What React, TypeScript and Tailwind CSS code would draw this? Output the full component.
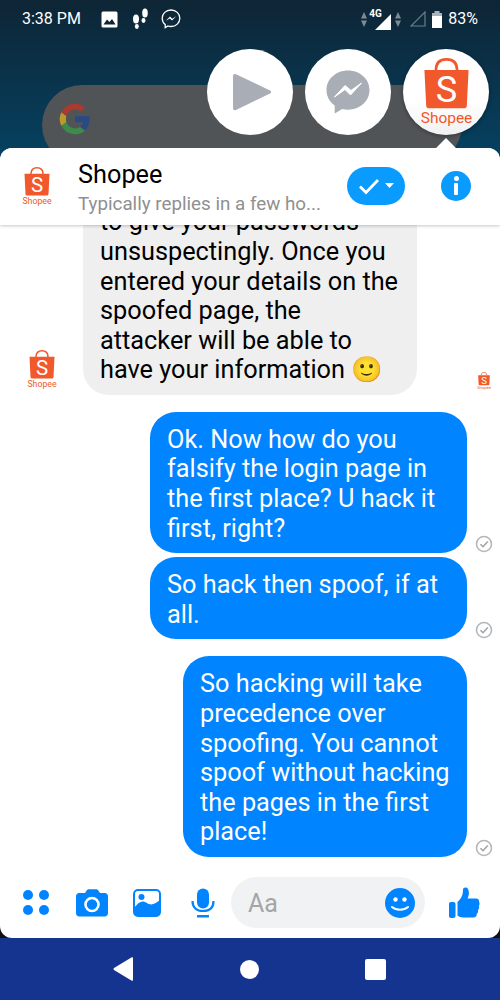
import React from "react";

const ROBOTO = "font-['Roboto',sans-serif]";

function ShopeeBag({ size }: { size: number }) {
    return (
        <svg width={size} height={size * 1.3} viewBox="0 0 60 78" className="block">
            <path d="M18 14 C18 4 24 1.500 30 1.500 C36 1.500 42 4 42 14" fill="none" stroke="#f1582c" strokeWidth="3" />
            <path d="M5 13.500 H55 L53 54 C52.800 56 51.500 57 49.500 57 H10.500 C8.500 57 7.200 56 7 54 Z" fill="#f1582c" />
            <text x="30" y="50" textAnchor="middle" fontSize="41" fill="#fff" fontFamily="Roboto, sans-serif">S</text>
            <text x="30" y="74" textAnchor="middle" fontSize="17.5" fill="#f1582c" fontFamily="Roboto, sans-serif">Shopee</text>
        </svg>
    );
}

function Check() {
    return (
        <svg width="18" height="18" viewBox="0 0 18 18" className="block">
            <circle cx="9" cy="9" r="7.500" fill="none" stroke="#b4b7ba" strokeWidth="1.600" />
            <path d="M5.500 9.200 L8 11.700 L12.800 6.500" fill="none" stroke="#a0a3a6" strokeWidth="1.600" />
        </svg>
    );
}

function Sent({ children, width }: { children: React.ReactNode; width: string }) {
    return (
        <div className="flex justify-end items-end">
            <div className={`${width} bg-[#0084ff] text-white rounded-[26px] pl-[17px] pr-2 pt-[13px] pb-[10px] text-[25.3px] leading-[29.6px] whitespace-nowrap`}>
                {children}
            </div>
            <div className="w-[33px] flex justify-center">
                <Check />
            </div>
        </div>
    );
}

export default function App() {
    return (
        <div className={`${ROBOTO} relative w-[500px] h-[1000px] overflow-hidden flex flex-col bg-[linear-gradient(180deg,#0e2535_0px,#06405f_150px,#06405f_900px,#111_930px)]`}>
            {/* launcher behind the chat */}
            <div className="absolute left-[42px] top-[85px] w-[420px] h-[80px] rounded-[40px] bg-[#505457] pl-[17px] pt-[18px]">
                <svg width="32" height="32" viewBox="0 0 48 48">
                    <path d="M46 24.500c0-1.600-.1-3.100-.4-4.500H24v9h12.400c-.5 2.900-2.200 5.300-4.600 6.900l7.200 5.600C43.200 37.600 46 31.600 46 24.500z" fill="#2a4a86" />
                    <path d="M24 47c6.200 0 11.400-2 15-5.500l-7.200-5.600c-2 1.400-4.600 2.200-7.800 2.200-6 0-11-4-12.900-9.500l-7.400 5.700C7.500 41.900 15.100 47 24 47z" fill="#3d8a4a" />
                    <path d="M11.100 28.600c-.5-1.400-.7-3-.7-4.600s.3-3.200.7-4.600l-7.400-5.700C2.100 16.800 1 20.300 1 24s1.100 7.200 2.700 10.300z" fill="#b99a2c" />
                    <path d="M24 9.900c3.400 0 6.400 1.200 8.800 3.400l6.400-6.400C35.400 3.300 30.200 1 24 1 15.100 1 7.500 6.100 3.700 13.700l7.400 5.700C13 13.900 18 9.900 24 9.900z" fill="#a83a30" />
                </svg>
            </div>

            <div className="relative h-[148px] shrink-0 text-white">
                <div className="flex items-center h-[38px] pl-[22px] pr-[22px]">
                    <span className="text-[16px] w-[79px] whitespace-nowrap">3:38 PM</span>
                    <svg width="17" height="17" viewBox="0 0 17 17">
                        <rect x="0.500" y="0.500" width="16" height="16" rx="1.500" fill="#fff" />
                        <path d="M2.500 13.500 L6 8.500 L8.500 11 L11 8 L14.500 13.500 Z" fill="#0e2535" />
                    </svg>
                    <svg width="18" height="22" viewBox="0 0 18 22" className="ml-[14px]" fill="#fff">
                        <ellipse cx="4" cy="11" rx="3" ry="4.500" />
                        <ellipse cx="4.800" cy="18.500" rx="2" ry="2.400" />
                        <ellipse cx="13" cy="5" rx="2.800" ry="4.500" />
                        <ellipse cx="11.500" cy="12.500" rx="2" ry="2.400" />
                    </svg>
                    <svg width="20" height="20" viewBox="0 0 20 20" className="ml-[11px]">
                        <path d="M10 1 C5 1 1.200 4.600 1.200 9.300 C1.200 11.900 2.300 14.100 4.200 15.600 V18.600 L7 17 C7.900 17.300 9 17.500 10 17.500 C15 17.500 18.800 13.900 18.800 9.300 C18.800 4.600 15 1 10 1 Z" fill="none" stroke="#fff" strokeWidth="1.300" />
                        <path d="M4.800 11.800 L9 7.500 L11.200 9.700 L15.200 7.200 L11 11.600 L8.800 9.400 Z" fill="#fff" />
                    </svg>
                    <div className="ml-auto flex items-center">
                        <svg width="6" height="15" viewBox="0 0 6 15" fill="#7c8b94">
                            <path d="M3 0 L6 6.500 H0 Z M0 8.500 H6 L3 15 Z" />
                        </svg>
                        <div className="relative w-[24px] h-[20px] mr-[4px]">
                            <svg width="16" height="16" viewBox="0 0 16 16" className="absolute right-0 bottom-[-1px]">
                                <path d="M16 0 V16 H0 Z" fill="#fff" />
                            </svg>
                            <span className="absolute left-[2px] top-[-2px] text-[10px] font-bold leading-[13px]">4G</span>
                        </div>
                        <svg width="6" height="15" viewBox="0 0 6 15" fill="#7c8b94" className="mr-[9px]">
                            <path d="M3 0 L6 6.500 H0 Z M0 8.500 H6 L3 15 Z" />
                        </svg>
                        <svg width="16" height="16" viewBox="0 0 16 16" className="mr-[6px]">
                            <path d="M15 1 V15 H1 Z" fill="none" stroke="#66808c" strokeWidth="1.200" />
                        </svg>
                        <svg width="10" height="17" viewBox="0 0 10 17" fill="#fff" className="mr-[6px]">
                            <rect x="2.500" y="0" width="5" height="2" fill="#a9b4ba" />
                            <rect x="0" y="2" width="10" height="3" fill="#a9b4ba" />
                            <rect x="0" y="5" width="10" height="12" />
                        </svg>
                        <span className="text-[16px]">83%</span>
                    </div>
                </div>

                <div className="absolute left-[207px] top-[49px] flex gap-[12px]">
                    <div className="w-[86px] h-[86px] rounded-full bg-white flex items-center justify-center pl-[3px]">
                        <svg width="40" height="38" viewBox="0 0 40 38">
                            <path d="M3 1 C1.500 1 1 2 1 3 V35 C1 37 2.500 37.500 4 37 L38 20.500 C39.500 19.500 39.500 18.500 38 17.500 L4 1.200 Z" fill="#a8adb6" />
                        </svg>
                    </div>
                    <div className="w-[86px] h-[86px] rounded-full bg-white flex items-center justify-center">
                        <svg width="44" height="44" viewBox="0 0 44 44">
                            <path d="M22 0.500 C10 0.500 0.500 9 0.500 20 C0.500 26.500 3.700 32 8.700 35.500 V43.500 L16.200 39 C18 39.500 20 39.700 22 39.700 C34 39.700 43.500 31 43.500 20 C43.500 9 34 0.500 22 0.500 Z" fill="#a8adb6" />
                            <path d="M8.500 27 L19 15.500 L25 20.500 L35.500 13 L24.500 25 L19 19.500 Z" fill="#fff" stroke="#fff" strokeWidth="1" />
                        </svg>
                    </div>
                    <div className="w-[86px] h-[86px] rounded-full bg-[linear-gradient(180deg,#fff_60%,#f1f1f1)] shadow-[0_1px_4px_rgba(0,0,0,0.35)] flex items-center justify-center">
                        <ShopeeBag size={53} />
                    </div>
                </div>
                {/* pointer above the panel */}
                <div className="absolute left-[439px] top-[141px] w-[14px] h-[14px] rotate-45 bg-white" />
            </div>

            <div className="relative flex-1 min-h-0 bg-white rounded-[12px] flex flex-col overflow-hidden">
                <div className="relative z-10 h-[77px] shrink-0 bg-white flex items-center shadow-[0_1px_3px_rgba(0,0,0,0.22)]">
                    <div className="w-[78px] flex justify-center pr-[5px]">
                        <ShopeeBag size={30} />
                    </div>
                    <div className="flex-1 min-w-0 mt-[2px]">
                        <div className="text-black text-[25.3px] leading-[30px]">Shopee</div>
                        <div className="text-[#8f8f8f] text-[18.8px] leading-[24px] mt-[2px] whitespace-nowrap">Typically replies in a few ho...</div>
                    </div>
                    <div className="w-[58px] h-[38px] rounded-[19px] bg-[#0a9bff] flex items-center justify-center gap-[5px] -mt-[2px]">
                        <svg width="22" height="18" viewBox="0 0 22 18">
                            <path d="M2 9.500 L8 15.500 L20 3" fill="none" stroke="#fff" strokeWidth="2.800" />
                        </svg>
                        <svg width="9" height="5" viewBox="0 0 9 5"><path d="M0 0 H9 L4.500 5 Z" fill="#fff" /></svg>
                    </div>
                    <div className="w-[30px] h-[30px] rounded-full bg-[#0a9bff] ml-[36px] mr-[29px] -mt-[2px] flex flex-col items-center justify-center gap-[2px]">
                        <div className="w-[5px] h-[5px] rounded-full bg-white" />
                        <div className="w-[4.5px] h-[12px] bg-white rounded-[1px]" />
                    </div>
                </div>

                <div className="flex-1 min-h-0 overflow-hidden flex flex-col justify-end pb-[10px]">
                    <div className="flex items-end mb-[17px]">
                        <div className="w-[83px] flex justify-center pb-[6px]">
                            <ShopeeBag size={30} />
                        </div>
                        <div className="shrink-0 w-[334px] bg-[#efefef] text-black rounded-[26px] pl-[17px] pr-2 pt-[13px] pb-[10px] text-[25.3px] leading-[29.6px] whitespace-nowrap">
                            to give your passwords<br />
                            unsuspectingly. Once you<br />
                            entered your details on the<br />
                            spoofed page, the<br />
                            attacker will be able to<br />
                            have your information <span className="font-['Noto_Color_Emoji',sans-serif]">🙂</span>
                        </div>
                        <div className="ml-auto mr-[9px] pb-[5px]">
                            <ShopeeBag size={14} />
                        </div>
                    </div>
                    <div className="flex flex-col gap-[4px] mb-[17px]">
                        <Sent width="w-[317px]">Ok. Now how do you<br />falsify the login page in<br />the first place? U hack it<br />first, right?</Sent>
                        <Sent width="w-[317px]">So hack then spoof, if at<br />all.</Sent>
                    </div>
                    <Sent width="w-[284px]">So hacking will take<br />precedence over<br />spoofing. You cannot<br />spoof without hacking<br />the pages in the first<br />place!</Sent>
                </div>

                <div className="h-[71px] shrink-0 flex items-center pl-[23px]">
                    <div className="grid grid-cols-2 gap-[5px] w-[26px]">
                        <div className="w-[10px] h-[10px] rounded-full bg-[#0084ff]" />
                        <div className="w-[10px] h-[10px] rounded-full bg-[#0084ff]" />
                        <div className="w-[10px] h-[10px] rounded-full bg-[#0084ff]" />
                        <div className="w-[10px] h-[10px] rounded-full bg-[#0084ff]" />
                    </div>
                    <svg width="32" height="28" viewBox="0 0 32 28" className="ml-[27px]">
                        <path d="M3 4 H9 L11 1 C11.500 0.500 12 0.300 13 0.300 H20 C21 0.300 21.500 0.500 22 1 L24 4 H29 C30.500 4 32 5.500 32 7 V24 C32 26 30.500 27.500 29 27.500 H3 C1.500 27.500 0 26 0 24 V7 C0 5.500 1.500 4 3 4 Z" fill="#0084ff" />
                        <circle cx="16" cy="15.500" r="6.500" fill="none" stroke="#fff" strokeWidth="2.600" />
                    </svg>
                    <svg width="28" height="28" viewBox="0 0 28 28" className="ml-[25px]">
                        <rect x="1" y="1" width="26" height="26" rx="4" fill="#fff" stroke="#0084ff" strokeWidth="2" />
                        <circle cx="8.500" cy="8" r="3" fill="#0084ff" />
                        <path d="M1 19 C6 12 10 11 14 14 C18 17 22 15 27 11 V23 C27 25.500 25.500 27 23 27 H5 C2.500 27 1 25.500 1 23 Z" fill="#0084ff" />
                    </svg>
                    <svg width="24" height="30" viewBox="0 0 24 30" className="ml-[30px]">
                        <rect x="6" y="0.500" width="12" height="20" rx="6" fill="#0084ff" />
                        <path d="M1.500 13 C1.500 19.500 5.500 23 12 23 C18.500 23 22.500 19.500 22.500 13" fill="none" stroke="#0084ff" strokeWidth="2.200" />
                        <rect x="6" y="27" width="12" height="2.500" rx="0.500" fill="#0084ff" />
                    </svg>
                    <div className="ml-[16px] w-[194px] h-[51px] rounded-[25.5px] bg-[#f1f2f4] flex items-center pl-[17px] pr-[10px]">
                        <span className="text-[#a5a5a5] text-[25px] mt-[2px]">Aa</span>
                        <div className="ml-auto w-[30px] h-[30px] rounded-full bg-[#0084ff] flex items-center justify-center">
                            <svg width="30" height="30" viewBox="0 0 30 30">
                                <circle cx="10.500" cy="11.500" r="2.200" fill="#fff" />
                                <circle cx="19.500" cy="11.500" r="2.200" fill="#fff" />
                                <path d="M7 19 C11 22.500 19 22.500 23 19" fill="none" stroke="#fff" strokeWidth="2" strokeLinecap="round" />
                            </svg>
                        </div>
                    </div>
                    <svg width="31" height="32" viewBox="0 0 31 32" className="ml-[24px]">
                        <rect x="0" y="15" width="6.500" height="16" rx="2" fill="#0084ff" />
                        <path d="M8.500 15 C13 11 14 7 14 2.500 C14 0.500 17.500 -0.500 19 2 C20.500 5 20 8.500 18.500 11.500 H27 C29.500 11.500 30.500 13.500 30 15 C30.800 16 30.800 18 29.800 19 C30.500 20.500 30 22 29 23 C29.300 24.500 28.800 26 27.800 27 C27.800 29 26.500 30.500 24.500 30.500 H14 C11.500 30.500 10 29.500 8.500 28.500 Z" fill="#0084ff" />
                    </svg>
                </div>
            </div>

            <div className="h-[62px] shrink-0 bg-[#15348f] flex items-center justify-between pl-[113px] pr-[114px]">
                <svg width="21" height="24" viewBox="0 0 21 24">
                    <path d="M20 1 V23 C20 23.500 19.500 24 18.800 23.700 L1 13 C0.300 12.500 0.300 11.500 1 11 L18.800 0.300 C19.500 0 20 0.500 20 1 Z" fill="#fff" />
                </svg>
                <div className="w-[19px] h-[19px] rounded-full bg-white" />
                <div className="w-[21px] h-[21px] rounded-[2px] bg-white" />
            </div>
        </div>
    );
}
